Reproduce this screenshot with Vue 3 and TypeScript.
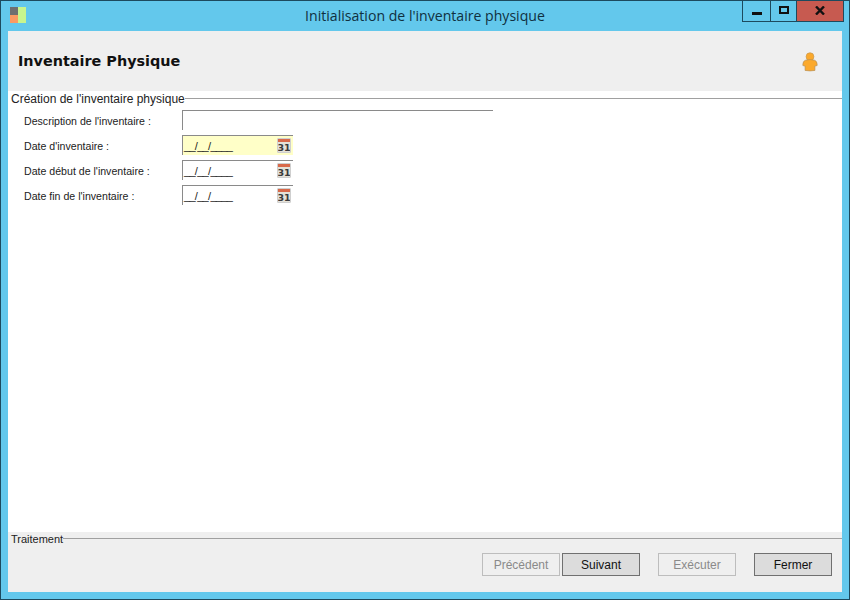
<script setup lang="ts">
interface Field { label: string; kind: 'text' | 'date'; required?: boolean }
const fields: Field[] = [
  { label: "Description de l'inventaire :", kind: 'text' },
  { label: "Date d'inventaire :", kind: 'date', required: true },
  { label: "Date début de l'inventaire :", kind: 'date' },
  { label: "Date fin de l'inventaire :", kind: 'date' },
]
</script>

<template>
  <div class="window">
    <div class="titlebar">
      <svg class="appicon" width="17" height="17" viewBox="0 0 17 17">
        <rect x="0" y="0" width="8" height="8" fill="#6f6f6f" />
        <rect x="0" y="8" width="8" height="8" fill="#fb9a62" />
        <rect x="8" y="0" width="8" height="16" fill="#c8f58e" />
      </svg>
      <div class="wintitle">Initialisation de l'inventaire physique</div>
      <div class="controls">
        <div class="ctl min"><span class="min-glyph"></span></div>
        <div class="ctl max"><span class="max-glyph"></span></div>
        <div class="ctl close">
          <svg width="10" height="9" viewBox="0 0 10 9"><path d="M1 0.5 L9 8.5 M9 0.5 L1 8.5" stroke="#111" stroke-width="2.4" fill="none" /></svg>
        </div>
      </div>
    </div>
    <div class="client">
      <header class="head">
        <h1>Inventaire Physique</h1>
        <svg class="person" width="16" height="20" viewBox="0 0 18 22">
          <circle cx="9" cy="5" r="4.4" fill="#fba92c" stroke="#c99a50" stroke-width="0.8" />
          <path d="M4 9 Q9 7.5 14 9 Q17 10 17 13.5 L17 15 L14.5 15.5 L14.5 20.5 Q9 21.5 3.5 20.5 L3.5 15.5 L1 15 L1 13.5 Q1 10 4 9 Z" fill="#fba92c" stroke="#b98f55" stroke-width="0.8" />
        </svg>
      </header>
      <main class="body">
        <div class="legend"><span>Création de l'inventaire physique</span><i class="rule"></i></div>
        <div class="form">
          <div v-for="f in fields" :key="f.label" class="row">
            <label>{{ f.label }}</label>
            <div v-if="f.kind === 'text'" class="input text"></div>
            <div v-else class="input date" :class="{ req: f.required }">
              <span class="mask">__/__/____</span>
              <span class="cal"><i class="cal-top"></i><b>31</b></span>
            </div>
          </div>
        </div>
      </main>
      <footer class="foot">
        <div class="legend small"><span>Traitement</span><i class="rule"></i></div>
        <div class="buttons">
          <button class="btn off" disabled>Précédent</button>
          <button class="btn next">Suivant</button>
          <button class="btn off exec" disabled>Exécuter</button>
          <button class="btn close-btn">Fermer</button>
        </div>
      </footer>
    </div>
  </div>
</template>

<style>
html, body { margin: 0; padding: 0; background: #63c8ec; }
</style>

<style scoped>
.window {
  width: 850px; height: 600px; box-sizing: border-box;
  background: #63c8ec; border: 1px solid #1d4a5e;
  display: flex; flex-direction: column;
  font-family: "Liberation Sans", sans-serif; color: #111;
  overflow: hidden;
}
.titlebar { height: 30px; flex: none; display: flex; position: relative; }
.appicon { position: absolute; left: 9px; top: 6px; }
.wintitle { flex: 1; text-align: center; font-family: "Open Sans", sans-serif; font-size: 14.1px; line-height: 30px; color: #10303f; }
.controls { position: absolute; right: 5px; top: -1px; height: 22px; display: flex; border: 1px solid #1d4a5e; border-top: none; box-sizing: border-box; }
.ctl { height: 100%; display: flex; align-items: center; justify-content: center; box-sizing: border-box; }
.min { width: 28px; border-right: 1px solid #1d4a5e; }
.max { width: 26px; border-right: 1px solid #1d4a5e; }
.close { width: 46px; background: #c75a50; }
.min-glyph { width: 10px; height: 3px; background: #111; margin-top: 6px; }
.max-glyph { box-sizing: border-box; width: 10px; height: 8px; border: 2px solid #111; margin-top: -1px; }
.close svg { margin-top: -1px; }
.client { width: 834px; height: 561px; margin-left: 7px; display: flex; flex-direction: column; background: #fff; }
.head { height: 60px; flex: none; background: #efefef; display: flex; align-items: center; justify-content: space-between; padding: 0 24px 0 10px; }
.head h1 { margin: 0; font-family: "DejaVu Sans", sans-serif; font-weight: 700; font-size: 14.4px; color: #111; }
.person { margin-top: 1px; }
.body { flex: 1; min-height: 0; background: #fff; }
.legend { display: flex; align-items: center; padding-left: 3px; font-size: 12px; line-height: 14px; color: #222; }
.legend.small { font-size: 11px; }
.legend span { white-space: nowrap; }
.rule { flex: 1; height: 1px; background: #a0a0a0; margin-top: -1px; }
.body .legend { padding-top: 1px; }
.form { padding: 4px 0 0 16px; display: flex; flex-direction: column; gap: 5px; }
.row { display: flex; align-items: center; height: 20px; }
.row label { width: 158px; font-size: 10.6px; color: #222; white-space: nowrap; padding-top: 1px; }
.input { box-sizing: border-box; height: 20px; border-top: 1px solid #8a8a8a; border-left: 1px solid #8a8a8a; position: relative; }
.input.text { width: 311px; }
.input.date { width: 111px; display: flex; align-items: center; background: #fff; }
.input.req { background: #ffffc8; }
.mask { font-size: 11px; letter-spacing: -0.7px; color: #222; padding-left: 1px; }
.cal { position: absolute; right: 2px; top: 2px; width: 14px; height: 15px; background: #e4e1d8; box-sizing: border-box; border: 1px solid #cfcfcf; border-radius: 1px; display: flex; flex-direction: column; align-items: center; overflow: hidden; }
.cal-top { display: block; width: 100%; height: 3px; flex: none; background: #d8694a; }
.cal b { font-family: "DejaVu Sans", sans-serif; font-size: 9.5px; line-height: 11px; color: #3a3a3a; font-weight: 700; }
.foot { height: 60px; flex: none; background: #efefef; }
.buttons { display: flex; padding: 7px 10px 0 474px; }
.btn { box-sizing: border-box; width: 78px; height: 23px; padding: 0; font-family: "Liberation Sans", sans-serif; font-size: 12px; background: #dcdcdc; border: 1px solid #707070; color: #111; }
.btn.off { background: #efefef; border-color: #bdbdbd; color: #8a8a8a; }
.next { margin-left: 2px; }
.exec { margin-left: 18px; }
.close-btn { margin-left: 18px; }
</style>
